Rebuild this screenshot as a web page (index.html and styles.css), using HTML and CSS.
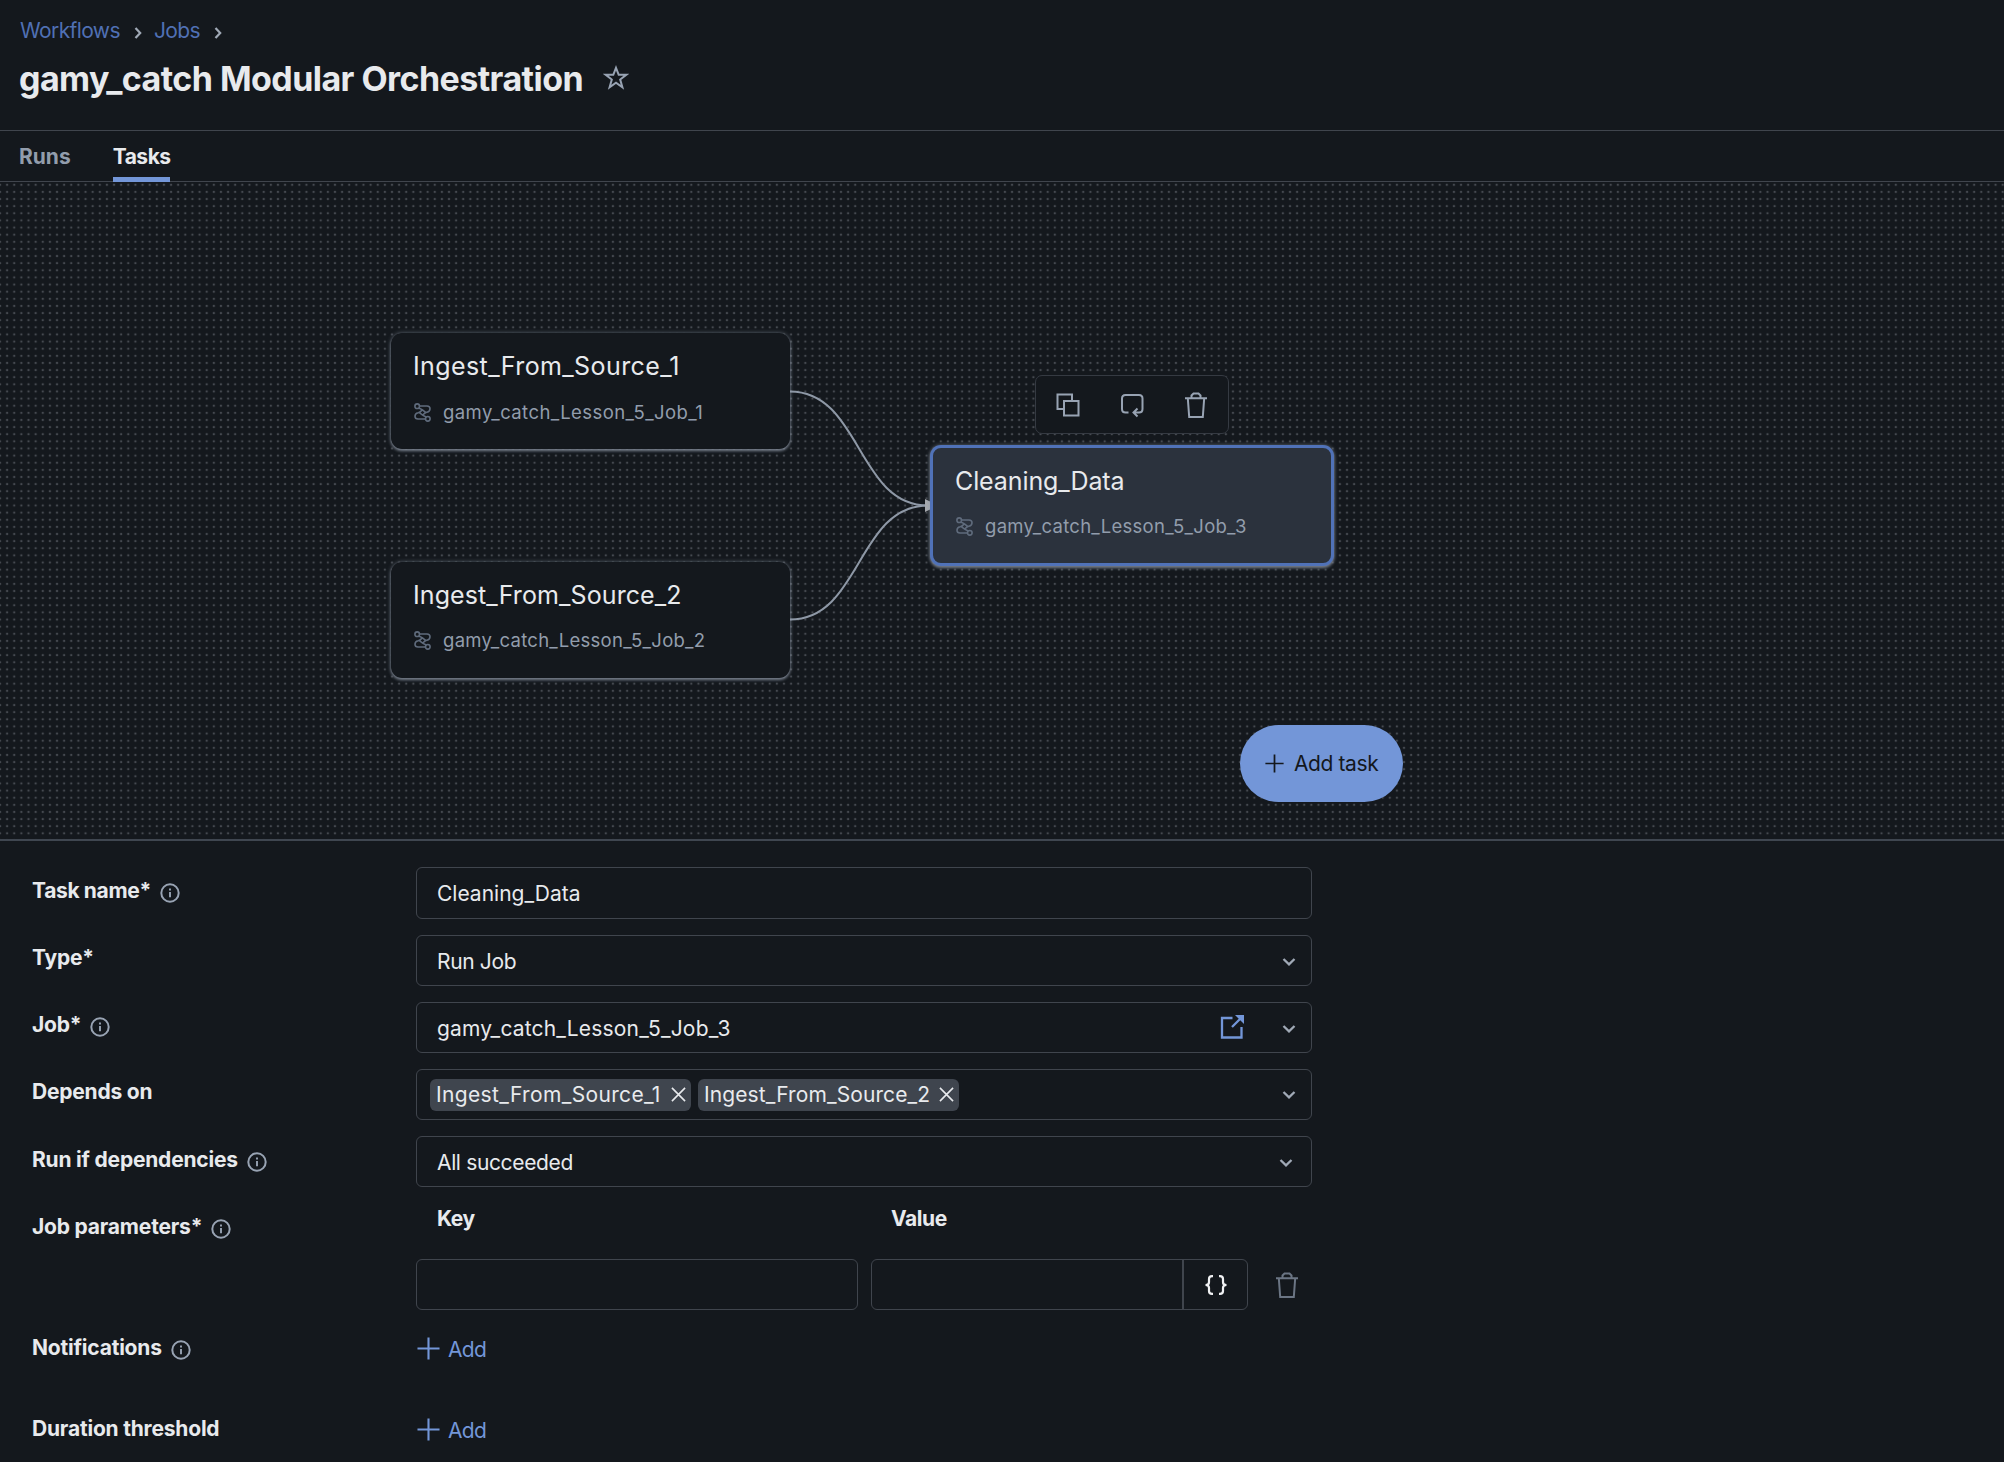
FILE: index.html
```
<!DOCTYPE html>
<html lang="en">
<head>
<meta charset="utf-8">
<title>Modular Orchestration</title>
<link rel="stylesheet" href="styles.css">
</head>
<body>
<svg class="defs" width="0" height="0" aria-hidden="true">
  <symbol id="info" viewBox="0 0 20 20"><circle cx="10" cy="10" r="8.7" fill="none" stroke="currentColor" stroke-width="2"/><path d="M10 9v5.2M10 5.6v2" fill="none" stroke="currentColor" stroke-width="1.9"/></symbol>
  <symbol id="chev" viewBox="0 0 14 10"><path d="M1.5 2l5.5 5.3L12.500 2" fill="none" stroke="currentColor" stroke-width="2.300"/></symbol>
  <symbol id="trash" viewBox="0 0 24 28"><path d="M1 7.300h22M7.500 7V4.500L9.500 2.500h5L16.500 4.500V7M3.800 7.300L5.200 26h13.600L20.200 7.300" fill="none" stroke="currentColor" stroke-width="2"/></symbol>
  <symbol id="plus" viewBox="0 0 24 24"><path d="M12 .5v23M.5 12h23" fill="none" stroke="currentColor" stroke-width="2.200"/></symbol>
  <symbol id="flow" viewBox="0 0 17 19"><g fill="none" stroke="currentColor" stroke-width="1.600"><circle cx="3.200" cy="3.200" r="2.300"/><circle cx="13.800" cy="15.800" r="2.300"/><path d="M5.500 3H13q3 0 3 2.800T13 9.200L11.800 9.500M11.500 16H4q-3 0-3-2.800T4 9.800L5.200 9.500"/><path d="M4.800 5L8.500 6.900l3.300 2.600-3.300 2.600-3.300-2.600L8.500 6.900M8.500 12.100L12.200 14"/></g></symbol>
  <symbol id="cross" viewBox="0 0 16 16"><path d="M1 1l14 14M15 1L1 15" fill="none" stroke="currentColor" stroke-width="1.700"/></symbol>
</svg>

<header class="header">
  <nav class="crumbs">
    <a class="crumb">Workflows</a>
    <svg class="crumb-sep" viewBox="0 0 8 12"><path d="M1.500 1l4.700 5-4.700 5"/></svg>
    <a class="crumb">Jobs</a>
    <svg class="crumb-sep" viewBox="0 0 8 12"><path d="M1.500 1l4.700 5-4.700 5"/></svg>
  </nav>
  <div class="title-row">
    <h1 class="title">gamy_catch Modular Orchestration</h1>
    <svg class="star" viewBox="0 0 26 26"><path d="M13 2.800l2.700 7h7.500l-6 4.700 2.200 7.800L13 17.700l-6.400 4.600 2.200-7.800-6-4.700h7.500z"/></svg>
  </div>
</header>

<nav class="tabs">
  <a class="tab">Runs</a>
  <a class="tab tab-active">Tasks</a>
</nav>

<section class="canvas">
  <svg class="graph" width="2004" height="657" viewBox="0 182 2004 657">
    <defs><pattern id="dots" x="-3.563" y="181.200" width="7.127" height="7.127" patternUnits="userSpaceOnUse"><circle cx="3.563" cy="3.563" r="1.200" fill="#454950"/></pattern></defs>
    <rect x="0" y="182" width="2004" height="657" fill="url(#dots)"/>
    <g class="edges"><path d="M790 391.500C861 391.500 857 505.500 928 505.500"/><path d="M790 619.500C861 619.500 857 505.500 928 505.500"/></g>
    <path class="arrow" d="M925 499l6 3v7l-6 3z"/>
  </svg>

  <article class="node node-1">
    <div class="node-title">Ingest_From_Source_1</div>
    <div class="node-sub"><svg class="flow"><use href="#flow"/></svg><span>gamy_catch_Lesson_5_Job_1</span></div>
  </article>
  <article class="node node-2">
    <div class="node-title">Ingest_From_Source_2</div>
    <div class="node-sub"><svg class="flow"><use href="#flow"/></svg><span>gamy_catch_Lesson_5_Job_2</span></div>
  </article>
  <article class="node node-3">
    <div class="node-title">Cleaning_Data</div>
    <div class="node-sub"><svg class="flow"><use href="#flow"/></svg><span>gamy_catch_Lesson_5_Job_3</span></div>
  </article>

  <div class="toolbar">
    <svg class="tool" viewBox="0 0 26 26"><path d="M9 17H2.500V2.500H17V9M9 9h14.500v14.500H9z"/></svg>
    <svg class="tool" viewBox="0 0 26 26"><path d="M8.500 20.500H5.500q-3.500 0-3.500-3.500V6.500Q2 3 5.500 3h13.500q3.500 0 3.500 3.500V17q0 3.500-3.500 3.500H14M17.500 16.500l-4 4 4 4"/></svg>
    <svg class="tool tool-trash"><use href="#trash"/></svg>
  </div>

  <button class="add-task"><svg class="add-plus"><use href="#plus"/></svg><span>Add task</span></button>
</section>

<form class="form">
  <div class="row row-first">
    <div class="label">Task name*<svg class="info"><use href="#info"/></svg></div>
    <div class="field"><span class="value">Cleaning_Data</span></div>
  </div>
  <div class="row">
    <div class="label">Type*</div>
    <div class="field"><span class="value value-tight">Run Job</span><svg class="chev"><use href="#chev"/></svg></div>
  </div>
  <div class="row">
    <div class="label">Job*<svg class="info"><use href="#info"/></svg></div>
    <div class="field"><span class="value value-job">gamy_catch_Lesson_5_Job_3</span>
      <svg class="ext" viewBox="0 0 24 24"><path d="M12.500 3H2v19.500h19.500V12M12 12L21.500 2.500"/><path class="ext-head" d="M15 0h9v9z"/></svg>
      <svg class="chev"><use href="#chev"/></svg></div>
  </div>
  <div class="row">
    <div class="label">Depends on</div>
    <div class="field field-tags">
      <span class="tag tag-wide">Ingest_From_Source_1<svg class="cross"><use href="#cross"/></svg></span>
      <span class="tag">Ingest_From_Source_2<svg class="cross"><use href="#cross"/></svg></span>
      <svg class="chev"><use href="#chev"/></svg></div>
  </div>
  <div class="row">
    <div class="label label-low">Run if dependencies<svg class="info"><use href="#info"/></svg></div>
    <div class="field field-last"><span class="value value-tight">All succeeded</span><svg class="chev"><use href="#chev"/></svg></div>
  </div>
  <div class="row row-params">
    <div class="label label-low">Job parameters*<svg class="info"><use href="#info"/></svg></div>
    <div class="params">
      <div class="params-head"><span>Key</span><span>Value</span></div>
      <div class="params-row">
        <div class="box"></div>
        <div class="box box-value"><span class="braces"><svg viewBox="0 0 24 20"><path d="M9 1.200H8Q5 1.200 5 4v3.200Q5 10 1.500 10 5 10 5 12.800V16q0 2.800 3 2.800h1M15 1.200h1q3 0 3 2.800v3.200Q19 10 22.500 10 19 10 19 12.800V16q0 2.800-3 2.800h-1"/></svg></span></div>
        <svg class="row-trash"><use href="#trash"/></svg>
      </div>
    </div>
  </div>
  <div class="row row-add">
    <div class="label">Notifications<svg class="info"><use href="#info"/></svg></div>
    <a class="add"><svg class="plus"><use href="#plus"/></svg>Add</a>
  </div>
  <div class="row row-add">
    <div class="label">Duration threshold</div>
    <a class="add"><svg class="plus"><use href="#plus"/></svg>Add</a>
  </div>
</form>
</body>
</html>
```
FILE: styles.css
```
* { box-sizing: border-box; }
body {
  margin: 0;
  width: 2004px;
  height: 1462px;
  overflow: hidden;
  background: #14181d;
  color: #e8eaed;
  font: 400 21px/28px Inter, "Liberation Sans", sans-serif;
}
svg { display: block; flex: none; }
.defs { position: absolute; }
.header { height: 131px; border-bottom: 1px solid #40454d; padding: 17px 19px 0; }
.crumbs { display: flex; align-items: center; height: 28px; padding-left: 1px; color: #5070b4; letter-spacing: -.6px; }
.crumb-sep { width: 8px; height: 12px; margin: 3px 12px 0 14px; fill: none; stroke: #a0a9b6; stroke-width: 2.200; }
.title-row { display: flex; align-items: center; margin-top: 12px; }
.title { margin: 0; width: 565px; font-size: 34px; line-height: 44px; font-weight: 700; letter-spacing: -.56px; white-space: nowrap; }
.star { width: 26px; height: 26px; margin: -2px 0 0 19px; fill: none; stroke: #98a3b3; stroke-width: 2; }
.tabs { display: flex; gap: 42px; height: 51px; padding-left: 19px; border-bottom: 1px solid #40454d; font-weight: 650; }
.tab { height: 51px; padding-top: 12px; color: #929dac; }
.tab-active { width: 57px; color: #e8eaed; border-bottom: 5px solid #7396d8; letter-spacing: -.5px; }
.canvas { position: relative; height: 659px; border-bottom: 2px solid #3f4650; }
.edges { fill: none; stroke: #8e98a6; stroke-width: 2; }
.arrow { fill: #a5a8ad; }
.node { position: absolute; left: 391px; width: 399px; height: 116px; padding: 17px 22px; border-radius: 11px; background: #14181d; box-shadow: 0 2px 3px rgba(150,160,175,.65), 0 0 4px rgba(150,160,175,.55); }
.node-1 { top: 151px; }
.node-2 { top: 380px; }
.node-3 { left: 930px; top: 263px; width: 404px; height: 121px; padding: 17px 22px; border: 3px solid #5072b8; background: #2b323d; }
.node-title { font-size: 25px; line-height: 32px; letter-spacing: .4px; }
.node-2 .node-title { letter-spacing: .1px; }
.node-3 .node-title { letter-spacing: -.1px; }
.node-sub { display: flex; align-items: center; gap: 12px; margin-top: 18px; padding-left: 1px; color: #929dac; font-size: 18.500px; line-height: 24px; letter-spacing: .42px; }
.node-2 .node-sub, .node-3 .node-sub { margin-top: 17px; letter-spacing: .28px; }
.flow { width: 17px; height: 19px; color: #5f6b7c; }
.toolbar { position: absolute; left: 1035px; top: 193px; width: 194px; height: 59px; display: flex; align-items: center; justify-content: space-between; padding: 0 20px 0 19px; border: 1px solid #353a42; border-radius: 7px; background: #14181d; color: #98a3b3; }
.tool { width: 26px; height: 26px; fill: none; stroke: #98a3b3; stroke-width: 2; }
.tool-trash { width: 24px; height: 28px; stroke: none; }
.add-task { position: absolute; left: 1240px; top: 543px; width: 163px; height: 77px; display: flex; align-items: center; gap: 10px; padding: 0 0 0 25px; border: 0; border-radius: 39px; background: #7396d8; color: #14181d; font: inherit; letter-spacing: -.4px; white-space: nowrap; }
.add-plus { width: 19px; height: 19px; }
.form { display: flex; flex-direction: column; gap: 16px; padding: 26px 0 0 32px; }
.row { display: grid; grid-template-columns: 384px 896px; height: 51px; }
.row-first { height: 52px; }
.label { display: flex; align-items: center; height: 46px; font-weight: 650; letter-spacing: -.2px; }
.row-first .label { height: 47px; letter-spacing: -.35px; }
.label-low { height: 48px; }
.info { width: 20px; height: 20px; margin: 4px 0 0 9px; color: #98a3b3; }
.field { display: flex; align-items: center; padding: 2px 15px 0 20px; border: 1px solid #40454d; border-radius: 6px; }
.value-job { letter-spacing: .18px; }
.value-tight { letter-spacing: -.35px; }
.chev { width: 14px; height: 10px; margin-left: auto; color: #a0a9b6; }
.field-last { padding-right: 18px; }
.ext { width: 24px; height: 24px; margin: -3px 38px 0 auto; fill: none; stroke: #7396d8; stroke-width: 2.300; }
.ext-head { fill: #7396d8; stroke: none; }
.ext + .chev { margin-left: 0; }
.field-tags { padding: 0 15px 0 13px; gap: 7px; }
.tag { display: flex; align-items: center; justify-content: space-between; width: 261px; height: 32px; padding: 1px 5px 0 6px; border-radius: 6px; background: #3f454e; letter-spacing: .11px; }
.tag-wide { letter-spacing: .36px; }
.cross { width: 15px; height: 15px; margin-top: -2px; }
.row-params { height: 107px; }
.params-head { display: grid; grid-template-columns: 454px 1fr; padding: 2px 0 0 21px; height: 56px; font-weight: 650; letter-spacing: -.4px; }
.params-row { display: flex; align-items: center; height: 51px; }
.box { width: 442px; height: 51px; border: 1px solid #40454d; border-radius: 6px; }
.box-value { display: flex; justify-content: flex-end; width: 377px; margin-left: 13px; }
.braces { display: flex; align-items: center; justify-content: center; width: 65px; border-left: 2px solid #40454d; }
.braces svg { width: 24px; height: 20px; fill: none; stroke: #f0f1f3; stroke-width: 2.200; }
.row-trash { width: 24px; height: 28px; margin-left: 27px; color: #6b7584; }
.row-add { height: 65px; }
.row-add .label { height: 44px; }
.add { display: flex; align-items: center; height: 47px; gap: 9px; color: #7396d8; letter-spacing: -.7px; }
.plus { width: 23px; height: 23px; margin: -2px -1px 0 1px; }
```
